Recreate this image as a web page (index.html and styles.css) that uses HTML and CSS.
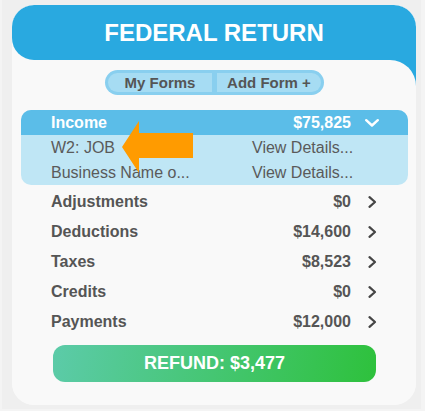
FILE: index.html
```html
<!DOCTYPE html>
<html lang="en">
<head>
    <meta charset="UTF-8">
    <meta name="viewport" content="width=device-width, initial-scale=1.0">
    <title>Federal Return</title>
    <link rel="stylesheet" href="styles.css">
</head>
<body>
    <div class="frame">
        <div class="card">
            <div class="head-wrap">
                <h1 class="card-head">FEDERAL RETURN</h1>
            </div>
            <div class="card-body">
                <div class="toggle">
                    <button class="toggle-btn left">My Forms</button>
                    <button class="toggle-btn right">Add Form +</button>
                </div>

                <div class="income">
                    <div class="row income-head">
                        <span class="name">Income</span>
                        <span class="amount">$75,825</span>
                        <span class="chev">
                            <svg width="14" height="8" viewBox="0 0 14 8"><polyline points="1.2,1.2 7,6.5 12.8,1.2" fill="none" stroke="#fff" stroke-width="2.4" stroke-linecap="round" stroke-linejoin="round"/></svg>
                        </span>
                    </div>
                    <div class="sub-row">
                        <span>W2: JOB</span>
                        <span>View Details...</span>
                    </div>
                    <div class="sub-row">
                        <span>Business Name o...</span>
                        <span>View Details...</span>
                    </div>
                    <!-- pointer over the first form -->
                    <svg class="pointer" width="71" height="53" viewBox="0 0 71 53">
                        <polygon points="0,26 17,0 17,12 71,12 71,37 17,37 17,52" fill="#ff9b00"/>
                    </svg>
                </div>

                <div class="row">
                    <span class="name">Adjustments</span>
                    <span class="amount">$0</span>
                    <span class="chev"><svg width="9" height="12" viewBox="0 0 9 12"><polyline points="1.5,1.2 7,6 1.5,10.8" fill="none" stroke="#454545" stroke-width="2.2" stroke-linecap="round" stroke-linejoin="round"/></svg></span>
                </div>
                <div class="row">
                    <span class="name">Deductions</span>
                    <span class="amount">$14,600</span>
                    <span class="chev"><svg width="9" height="12" viewBox="0 0 9 12"><polyline points="1.5,1.2 7,6 1.5,10.8" fill="none" stroke="#454545" stroke-width="2.2" stroke-linecap="round" stroke-linejoin="round"/></svg></span>
                </div>
                <div class="row">
                    <span class="name">Taxes</span>
                    <span class="amount">$8,523</span>
                    <span class="chev"><svg width="9" height="12" viewBox="0 0 9 12"><polyline points="1.5,1.2 7,6 1.5,10.8" fill="none" stroke="#454545" stroke-width="2.2" stroke-linecap="round" stroke-linejoin="round"/></svg></span>
                </div>
                <div class="row">
                    <span class="name">Credits</span>
                    <span class="amount">$0</span>
                    <span class="chev"><svg width="9" height="12" viewBox="0 0 9 12"><polyline points="1.5,1.2 7,6 1.5,10.8" fill="none" stroke="#454545" stroke-width="2.2" stroke-linecap="round" stroke-linejoin="round"/></svg></span>
                </div>
                <div class="row">
                    <span class="name">Payments</span>
                    <span class="amount">$12,000</span>
                    <span class="chev"><svg width="9" height="12" viewBox="0 0 9 12"><polyline points="1.5,1.2 7,6 1.5,10.8" fill="none" stroke="#454545" stroke-width="2.2" stroke-linecap="round" stroke-linejoin="round"/></svg></span>
                </div>

                <button class="refund">REFUND: $3,477</button>
            </div>
        </div>
    </div>
</body>
</html>
```

FILE: styles.css
```css
body {
    margin: 0;
    background: #f4f4f4;
    font-family: "Liberation Sans", Arial, sans-serif;
    color: #555;
}
.frame {
    margin: 0 4px 0 2px;
    padding: 5px 5px 6px 10px;
    height: 398px;
    background: #efefef;
}
.card {
    width: 404px;
    border-radius: 22px;
    overflow: hidden;
    background: linear-gradient(#29a9e0 0, #29a9e0 100px, #f9f9f9 100px);
}
.head-wrap {
    background: #f9f9f9;
}
.card-head {
    margin: 0;
    height: 55px;
    line-height: 55px;
    text-align: center;
    font-size: 24px;
    font-weight: bold;
    color: #fff;
    background: #29a9e0;
    border-radius: 22px 22px 0 22px;
}
.card-body {
    background: #f9f9f9;
    border-top-right-radius: 26px;
    padding: 10px 8px 23px 9px;
}
.toggle {
    display: flex;
    width: 213px;
    margin: 0 auto;
    padding: 3px;
    gap: 5px;
    background: #89cfef;
    border-radius: 13px;
}
.toggle-btn {
    flex: 1;
    height: 19px;
    padding: 0;
    border: none;
    background: #a6dcf3;
    font-family: inherit;
    font-size: 15px;
    font-weight: bold;
    color: #555;
    line-height: 19px;
}
.toggle-btn.left {
    border-radius: 10px 0 0 10px;
}
.toggle-btn.right {
    border-radius: 0 10px 10px 0;
}
.income {
    position: relative;
    margin: 15px 0 2px;
    background: #bfe6f5;
    border-radius: 10px;
    overflow: hidden;
}
.row {
    display: flex;
    align-items: center;
    height: 30px;
    padding: 0 28px 0 30px;
    font-size: 16px;
    font-weight: bold;
}
.row .name {
    flex: 1;
}
.chev {
    display: flex;
    justify-content: center;
    width: 16px;
    margin-left: 13px;
}
.income-head {
    height: 25px;
    background: #5bbde8;
    color: #fff;
}
.sub-row {
    display: grid;
    grid-template-columns: 201px 1fr;
    height: 25px;
    line-height: 25px;
    padding-left: 30px;
    font-size: 16px;
    color: #5a5a5a;
}
.pointer {
    position: absolute;
    left: 101px;
    top: 11px;
}
.refund {
    display: block;
    width: 323px;
    height: 37px;
    margin: 8px auto 0;
    border: none;
    border-radius: 12px;
    background: linear-gradient(100deg, #5ccba9, #2ec13c);
    color: #fff;
    font-family: inherit;
    font-size: 18px;
    font-weight: bold;
}
```
